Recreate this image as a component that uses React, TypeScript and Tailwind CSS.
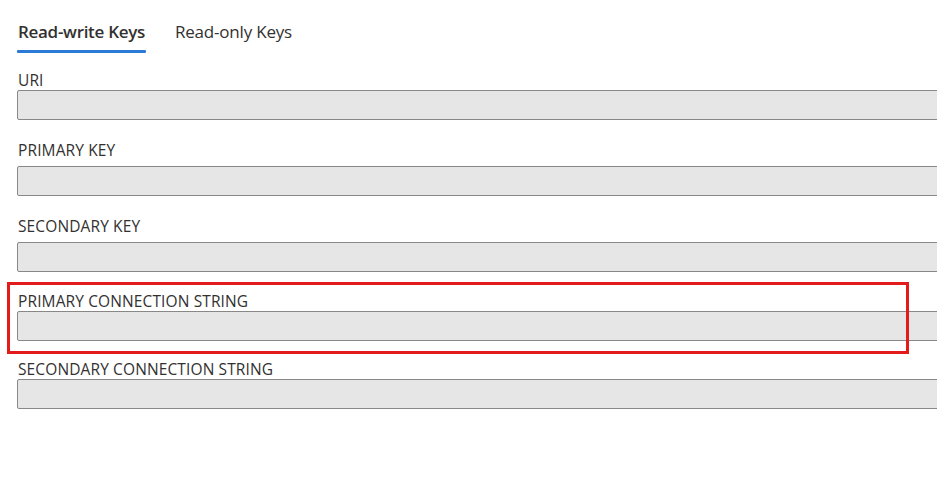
const fields = [
  { label: 'URI', top: 'mt-[17px]', gap: 'mt-0' },
  { label: 'PRIMARY KEY', top: 'mt-[20px]', gap: 'mt-[6px]' },
  { label: 'SECONDARY KEY', top: 'mt-[20px]', gap: 'mt-[6px]' },
  { label: 'PRIMARY CONNECTION STRING', top: 'mt-[19px]', gap: 'mt-0' },
  { label: 'SECONDARY CONNECTION STRING', top: 'mt-[18px]', gap: 'mt-0' },
];

export default function App() {
  return (
    <div
      className="relative w-[937px] h-[494px] overflow-hidden bg-white text-[#323130]"
      style={{ fontFamily: '"Open Sans", "Noto Sans", sans-serif' }}
    >
      <div className="pl-[17px] pt-[20px]">
        {/* Tabs */}
        <div className="flex gap-[29px]">
          <div className="flex flex-col">
            <span className="text-[17px] leading-[24px] font-semibold tracking-[-0.3px] px-px">Read-write Keys</span>
            <span className="mt-[6px] h-[3px] bg-[#2b7ad6] rounded-[1px]" />
          </div>
          <span className="text-[17px] leading-[24px] tracking-[-0.2px]">Read-only Keys</span>
        </div>

        {/* Fields */}
        {fields.map((f) => (
          <div key={f.label} className={f.top}>
            <div className="text-[15.5px] leading-[20px] px-px tracking-[0.12px]">{f.label}</div>
            <div className={`${f.gap} h-[30px] w-[960px] bg-[#e6e6e6] border border-[#8a8886] rounded-[2px]`} />
          </div>
        ))}
      </div>

      {/* highlight annotation */}
      <div className="absolute left-[7px] top-[282px] w-[902px] h-[72px] border-[3px] border-[#e31b1b]" />
    </div>
  );
}
